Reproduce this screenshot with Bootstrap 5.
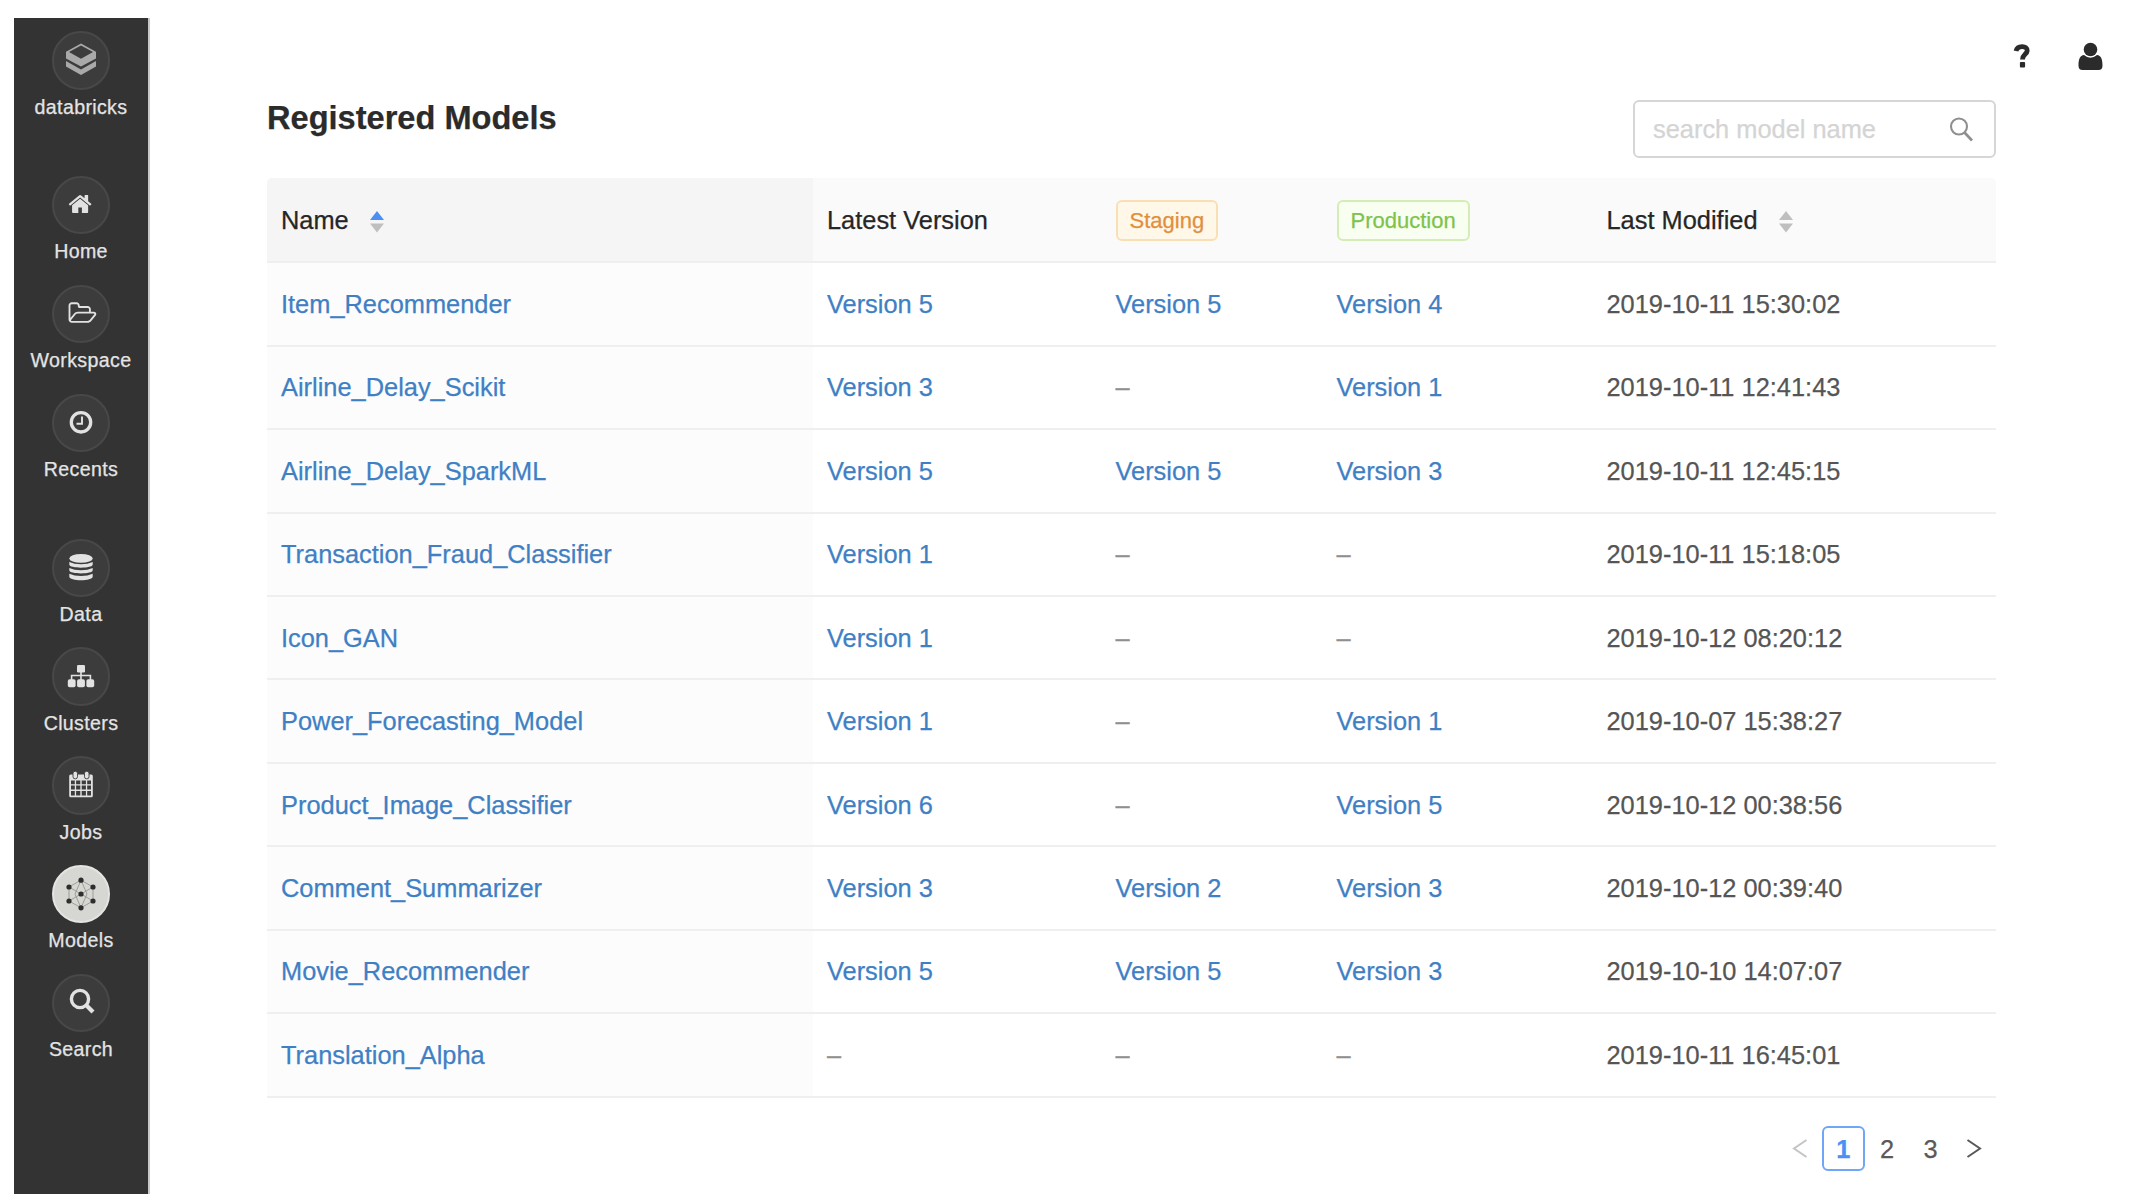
<!DOCTYPE html>
<html lang="en">
<head>
<meta charset="utf-8">
<title>Registered Models</title>
<link rel="stylesheet" href="https://cdn.jsdelivr.net/npm/bootstrap@5.3.0/dist/css/bootstrap.min.css">
<style>
body{font-family:"Liberation Sans",Arial,sans-serif;font-size:25.4px;line-height:1.5;color:#595959;background:#fff;overflow:hidden;-webkit-text-stroke:.25px currentColor}
.app{width:2134px;height:1198px;padding:18px 0 4px 14px}
.side{width:136px;background:#333;border-right:2px solid #c8c8c8;padding-top:13px}
.side-item{height:108.8px;color:#e4e4e4;font-size:19.6px;letter-spacing:.35px;line-height:28px;text-decoration:none}
.side-item:not([href]),.side-item:not([href]):hover{color:#e4e4e4}
.side-item.group-end{margin-bottom:36.2px}
.disc{width:58.5px;height:58.5px;background:#3c3c3c;border:2px solid #484848;color:#e2e2e2;margin-bottom:3px}
.side-item.current .disc{background:#d6d6d3;border-color:#e4e4e2;color:#333}
.disc svg{width:36px;height:36px;flex:none}
.main-area{padding:0 30px 0 117px}
.topbar{height:82px;padding-top:23px;gap:47px;color:#2b2b2b}
.content-area{width:1729px}
.page-title{font-size:32.6px;font-weight:700;color:#2b2b2b;line-height:40px;margin:-2px 0 0}
.search-box{width:363px;height:58px;border:2px solid #d6d6d6;border-radius:6px;padding:0 20px 0 18px}
.search-box input{font-size:25.4px;padding:0;border:0;background:none;color:#595959;box-shadow:none;line-height:36px}
.search-box input::placeholder{color:#d4d4d4;opacity:1}
.models{table-layout:fixed;width:1729px;margin:20.3px 0 0;border-collapse:separate;border-spacing:0;--bs-table-bg:transparent}
.models>:not(caption)>*>*{padding:0 0 0 14px;border-bottom:2.5px solid #efefef;height:83.44px;vertical-align:middle;box-shadow:none;color:#555;white-space:nowrap}
.models>thead>tr>th{height:85px;font-weight:400;color:#262626;background:#fafafa}
.models>thead>tr>th:first-child{background:#f5f5f5;border-top-left-radius:5px}
.models>thead>tr>th:last-child{border-top-right-radius:5px}
.models>tbody>tr>td:first-child{background:#fcfcfc}
.models>tbody>tr>td.none{color:#8f8f8f}
.models a{color:#3f80c4;text-decoration:none}
.tag{display:inline-block;font-size:22px;line-height:38px;height:41px;border:2px solid;border-radius:6px;padding:0 12px;vertical-align:middle}
.tag-staging{color:#e08f3c;background:#fff7e8;border-color:#f8dfb4}
.tag-production{color:#7fc24c;background:#f8fff0;border-color:#d3edb4}
.sorter{width:14px;height:22px;margin-left:21px;fill:#bfbfbf}
.sorter .on{fill:#4b8ff2}
.pager{margin:28px 0 0;color:#595959}
.pager .page-no{width:43.6px;height:45px;line-height:42px;border:2px solid transparent;border-radius:6px;text-align:center}
.pager .page-no.current{border-color:#6fa6f7;color:#4a90f5;font-weight:700}
.pager .page-no.off{color:#c4c4c4}
.arrow{fill:none;stroke:currentColor;stroke-width:2;width:16px;height:22px}
</style>
</head>
<body>
<div class="app d-flex">
  <nav class="side d-flex flex-column flex-shrink-0">
    <a class="side-item group-end d-flex flex-column align-items-center"><span class="disc rounded-circle d-flex align-items-center justify-content-center">
      <svg viewBox="-18 -18 36 36"><g fill="#a9a9a9"><path fill-rule="evenodd" d="M0-16.500L15-8.300V-1.500L0 6.600-15-1.500V-8.300ZM0-14.500L-12-8 0-1.300 12-8Z"/><path d="M-15 1L0 9.400 15 1V6.500L0 15-15 6.500V2Z"/></g></svg></span>databricks</a>
    <a class="side-item d-flex flex-column align-items-center"><span class="disc rounded-circle d-flex align-items-center justify-content-center">
      <svg viewBox="-18 -18 36 36" fill="currentColor"><path transform="translate(-12.500 -13.500) scale(.01395)" d="M1408 992v480q0 26-19 45t-45 19h-384v-384h-256v384h-384q-26 0-45-19t-19-45v-480q0-1 .5-3t.5-3l575-474 575 474q1 2 1 6zm223-69l-62 74q-8 9-21 11h-3q-13 0-21-7l-692-577-692 577q-12 8-24 7-13-2-21-11l-62-74q-8-10-7-23.500t11-21.500l719-599q32-26 76-26t76 26l244 204v-195q0-14 9-23t23-9h192q14 0 23 9t9 23v408l219 182q10 8 11 21.500t-7 23.500z"/></svg></span>Home</a>
    <a class="side-item d-flex flex-column align-items-center"><span class="disc rounded-circle d-flex align-items-center justify-content-center">
      <svg viewBox="-18 -18 36 36" fill="currentColor"><path transform="translate(-11.500 -13.500) scale(.0145)" d="M1717 931q0-35-53-35h-1088q-40 0-85.500 21.500t-71.500 52.500l-294 363q-18 24-18 40 0 35 53 35h1088q40 0 86-22t71-53l294-363q18-22 18-39zm-1141-163h768v-160q0-40-28-68t-68-28h-576q-40 0-68-28t-28-68v-64q0-40-28-68t-68-28h-320q-40 0-68 28t-28 68v853l256-315q44-53 116-87.500t140-34.500zm1269 163q0 62-46 120l-295 363q-43 53-116 87.500t-140 34.500h-1088q-92 0-158-66t-66-158v-960q0-92 66-158t158-66h320q92 0 158 66t66 158v32h544q92 0 158 66t66 158v160h192q54 0 99 24.500t67 70.500q15 32 15 68z"/></svg></span>Workspace</a>
    <a class="side-item group-end d-flex flex-column align-items-center"><span class="disc rounded-circle d-flex align-items-center justify-content-center">
      <svg viewBox="-18 -18 36 36" fill="none" stroke="currentColor"><circle cy="-.7" r="9.700" stroke-width="3.300"/><path d="M1-6.500V.8H-4.500" stroke-width="1.900"/></svg></span>Recents</a>
    <a class="side-item d-flex flex-column align-items-center"><span class="disc rounded-circle d-flex align-items-center justify-content-center">
      <svg viewBox="-18 -18 36 36" fill="currentColor"><ellipse cy="-9.600" rx="11.700" ry="4.400"/><path d="M-11.700-6Q-7-3.800 0-3.800T11.700-6V-3.500C11.700.7-11.700.7-11.700-3.500ZM-11.700 0Q-7 2.200 0 2.200T11.700 0V2.300C11.700 6.500-11.700 6.500-11.700 2.300ZM-11.700 5.800Q-7 8 0 8T11.700 5.800V8.500C11.700 13.500-11.700 13.500-11.700 8.500Z"/></svg></span>Data</a>
    <a class="side-item d-flex flex-column align-items-center"><span class="disc rounded-circle d-flex align-items-center justify-content-center">
      <svg viewBox="-18 -18 36 36" fill="currentColor"><rect x="-4" y="-12" width="8" height="7.500" rx="1.200"/><rect x="-13.200" y="2.200" width="7.800" height="8.100" rx="1.800"/><rect x="-3.900" y="2.200" width="7.800" height="8.100" rx="1.800"/><rect x="5.400" y="2.200" width="7.800" height="8.100" rx="1.800"/><path d="M0-5V4M-9.400 4V-1.500H9.400V4" fill="none" stroke="currentColor" stroke-width="1.600"/></svg></span>Clusters</a>
    <a class="side-item d-flex flex-column align-items-center"><span class="disc rounded-circle d-flex align-items-center justify-content-center">
      <svg viewBox="-18 -18 36 36" fill="currentColor"><path fill-rule="evenodd" d="M-10.300-10.500H10.300Q11.800-10.500 11.800-9V10.700Q11.800 12.200 10.300 12.200H-10.300Q-11.800 12.200-11.800 10.700V-9Q-11.800-10.500-10.300-10.500ZM-10-4.500V-.8H-6.200V-4.500ZM-4.900-4.500V-.8H-.7V-4.500ZM.7-4.500V-.8H4.900V-4.500ZM6.200-4.500V-.8H10V-4.500ZM-10 .4V4.600H-6.200V.4ZM-4.900 .4V4.600H-.7V.4ZM.7 .4V4.600H4.900V.4ZM6.200 .4V4.600H10V.4ZM-10 5.900V10.400H-6.200V5.900ZM-4.900 5.900V10.400H-.7V5.900ZM.7 5.900V10.400H4.900V5.900ZM6.200 5.900V10.400H10V5.900Z"/><rect x="-8" y="-13.700" width="4.500" height="7.500" rx="2" stroke="#3c3c3c" stroke-width=".9"/><rect x="3.500" y="-13.700" width="4.500" height="7.500" rx="2" stroke="#3c3c3c" stroke-width=".9"/></svg></span>Jobs</a>
    <a class="side-item current d-flex flex-column align-items-center"><span class="disc rounded-circle d-flex align-items-center justify-content-center">
      <svg viewBox="-18 -18 36 36"><path d="M0-13.800L12-7V7L0 13.800-12 7V-7ZM0-13.800L-6 0 0 13.800 6 0ZM-12-7L0 0 12 7M-12 7L0 0 12-7" fill="none" stroke="#969694" stroke-width=".9"/><g fill="#2e2e2e"><circle r="2.600"/><circle cy="-13.800" r="2.600"/><circle cy="13.800" r="2.600"/><circle cx="12" cy="-7" r="2.600"/><circle cx="12" cy="7" r="2.600"/><circle cx="-12" cy="-7" r="2.600"/><circle cx="-12" cy="7" r="2.600"/></g></svg></span>Models</a>
    <a class="side-item d-flex flex-column align-items-center"><span class="disc rounded-circle d-flex align-items-center justify-content-center">
      <svg viewBox="-18 -18 36 36" fill="none" stroke="currentColor"><circle cx="-1" cy="-4" r="8.600" stroke-width="3.400"/><path d="M5.300 2.300L12 9" stroke-width="4.200"/></svg></span>Search</a>
  </nav>
  <main class="main-area flex-grow-1">
    <div class="topbar d-flex justify-content-end align-items-start">
      <svg width="18" height="30" viewBox="0 0 18 30" fill="none" stroke="currentColor"><path d="M3 10C4.500 3.800 14.600 4.500 14.200 9.800C13.900 13.500 9.500 13.500 9.500 18.500" stroke-width="4.800"/><rect x="6.900" y="21" width="5.200" height="5.400" rx="1" fill="currentColor" stroke="none"/></svg>
      <svg width="26" height="30" viewBox="0 0 26 30" fill="currentColor"><circle cx="12.500" cy="8.500" r="6.800"/><path d="M6 14Q12.500 19.500 19 14C23 14.500 24.500 18 24.500 24.500Q24.500 29 20.500 29H4.500Q.5 29 .5 24.500C.5 18 2 14.500 6 14Z"/></svg>
    </div>
    <div class="content-area">
      <div class="d-flex justify-content-between align-items-start">
        <h1 class="page-title">Registered Models</h1>
        <div class="search-box d-flex align-items-center">
          <input class="form-control" type="text" placeholder="search model name">
          <svg class="flex-shrink-0" width="26" height="26" viewBox="0 0 26 26" fill="none" stroke="#8f8f8f" stroke-width="2.100"><circle cx="11" cy="10.500" r="8"/><path d="M16.500 16.500L24 24.500" stroke-width="2.700"/></svg>
        </div>
      </div>
      <table class="models table">
        <colgroup><col style="width:546px"><col style="width:288.500px"><col style="width:221px"><col style="width:270px"><col></colgroup>
        <thead><tr>
          <th>Name<svg class="sorter" viewBox="0 0 14 22"><path class="on" d="M7 0L14 9H0Z"/><path d="M0 12.500H14L7 21.500Z"/></svg></th>
          <th>Latest Version</th>
          <th><span class="tag tag-staging">Staging</span></th>
          <th><span class="tag tag-production">Production</span></th>
          <th>Last Modified<svg class="sorter" viewBox="0 0 14 22"><path d="M7 0L14 9H0Z"/><path d="M0 12.500H14L7 21.500Z"/></svg></th>
        </tr></thead>
        <tbody>
          <tr><td><a href="#">Item_Recommender</a></td><td><a href="#">Version 5</a></td><td><a href="#">Version 5</a></td><td><a href="#">Version 4</a></td><td>2019-10-11 15:30:02</td></tr>
          <tr><td><a href="#">Airline_Delay_Scikit</a></td><td><a href="#">Version 3</a></td><td class="none">–</td><td><a href="#">Version 1</a></td><td>2019-10-11 12:41:43</td></tr>
          <tr><td><a href="#">Airline_Delay_SparkML</a></td><td><a href="#">Version 5</a></td><td><a href="#">Version 5</a></td><td><a href="#">Version 3</a></td><td>2019-10-11 12:45:15</td></tr>
          <tr><td><a href="#">Transaction_Fraud_Classifier</a></td><td><a href="#">Version 1</a></td><td class="none">–</td><td class="none">–</td><td>2019-10-11 15:18:05</td></tr>
          <tr><td><a href="#">Icon_GAN</a></td><td><a href="#">Version 1</a></td><td class="none">–</td><td class="none">–</td><td>2019-10-12 08:20:12</td></tr>
          <tr><td><a href="#">Power_Forecasting_Model</a></td><td><a href="#">Version 1</a></td><td class="none">–</td><td><a href="#">Version 1</a></td><td>2019-10-07 15:38:27</td></tr>
          <tr><td><a href="#">Product_Image_Classifier</a></td><td><a href="#">Version 6</a></td><td class="none">–</td><td><a href="#">Version 5</a></td><td>2019-10-12 00:38:56</td></tr>
          <tr><td><a href="#">Comment_Summarizer</a></td><td><a href="#">Version 3</a></td><td><a href="#">Version 2</a></td><td><a href="#">Version 3</a></td><td>2019-10-12 00:39:40</td></tr>
          <tr><td><a href="#">Movie_Recommender</a></td><td><a href="#">Version 5</a></td><td><a href="#">Version 5</a></td><td><a href="#">Version 3</a></td><td>2019-10-10 14:07:07</td></tr>
          <tr><td><a href="#">Translation_Alpha</a></td><td class="none">–</td><td class="none">–</td><td class="none">–</td><td>2019-10-11 16:45:01</td></tr>
        </tbody>
      </table>
      <div class="pager d-flex justify-content-end">
        <span class="page-no off d-flex align-items-center justify-content-center"><svg class="arrow" viewBox="0 0 16 22"><path d="M14.500 3L2 11.500 14.500 20"/></svg></span>
        <span class="page-no current">1</span>
        <span class="page-no">2</span>
        <span class="page-no">3</span>
        <span class="page-no d-flex align-items-center justify-content-center"><svg class="arrow" viewBox="0 0 16 22"><path d="M1.500 3L14 11.500 1.500 20"/></svg></span>
      </div>
    </div>
  </main>
</div>
<script src="https://cdn.jsdelivr.net/npm/bootstrap@5.3.0/dist/js/bootstrap.bundle.min.js"></script>
</body>
</html>
